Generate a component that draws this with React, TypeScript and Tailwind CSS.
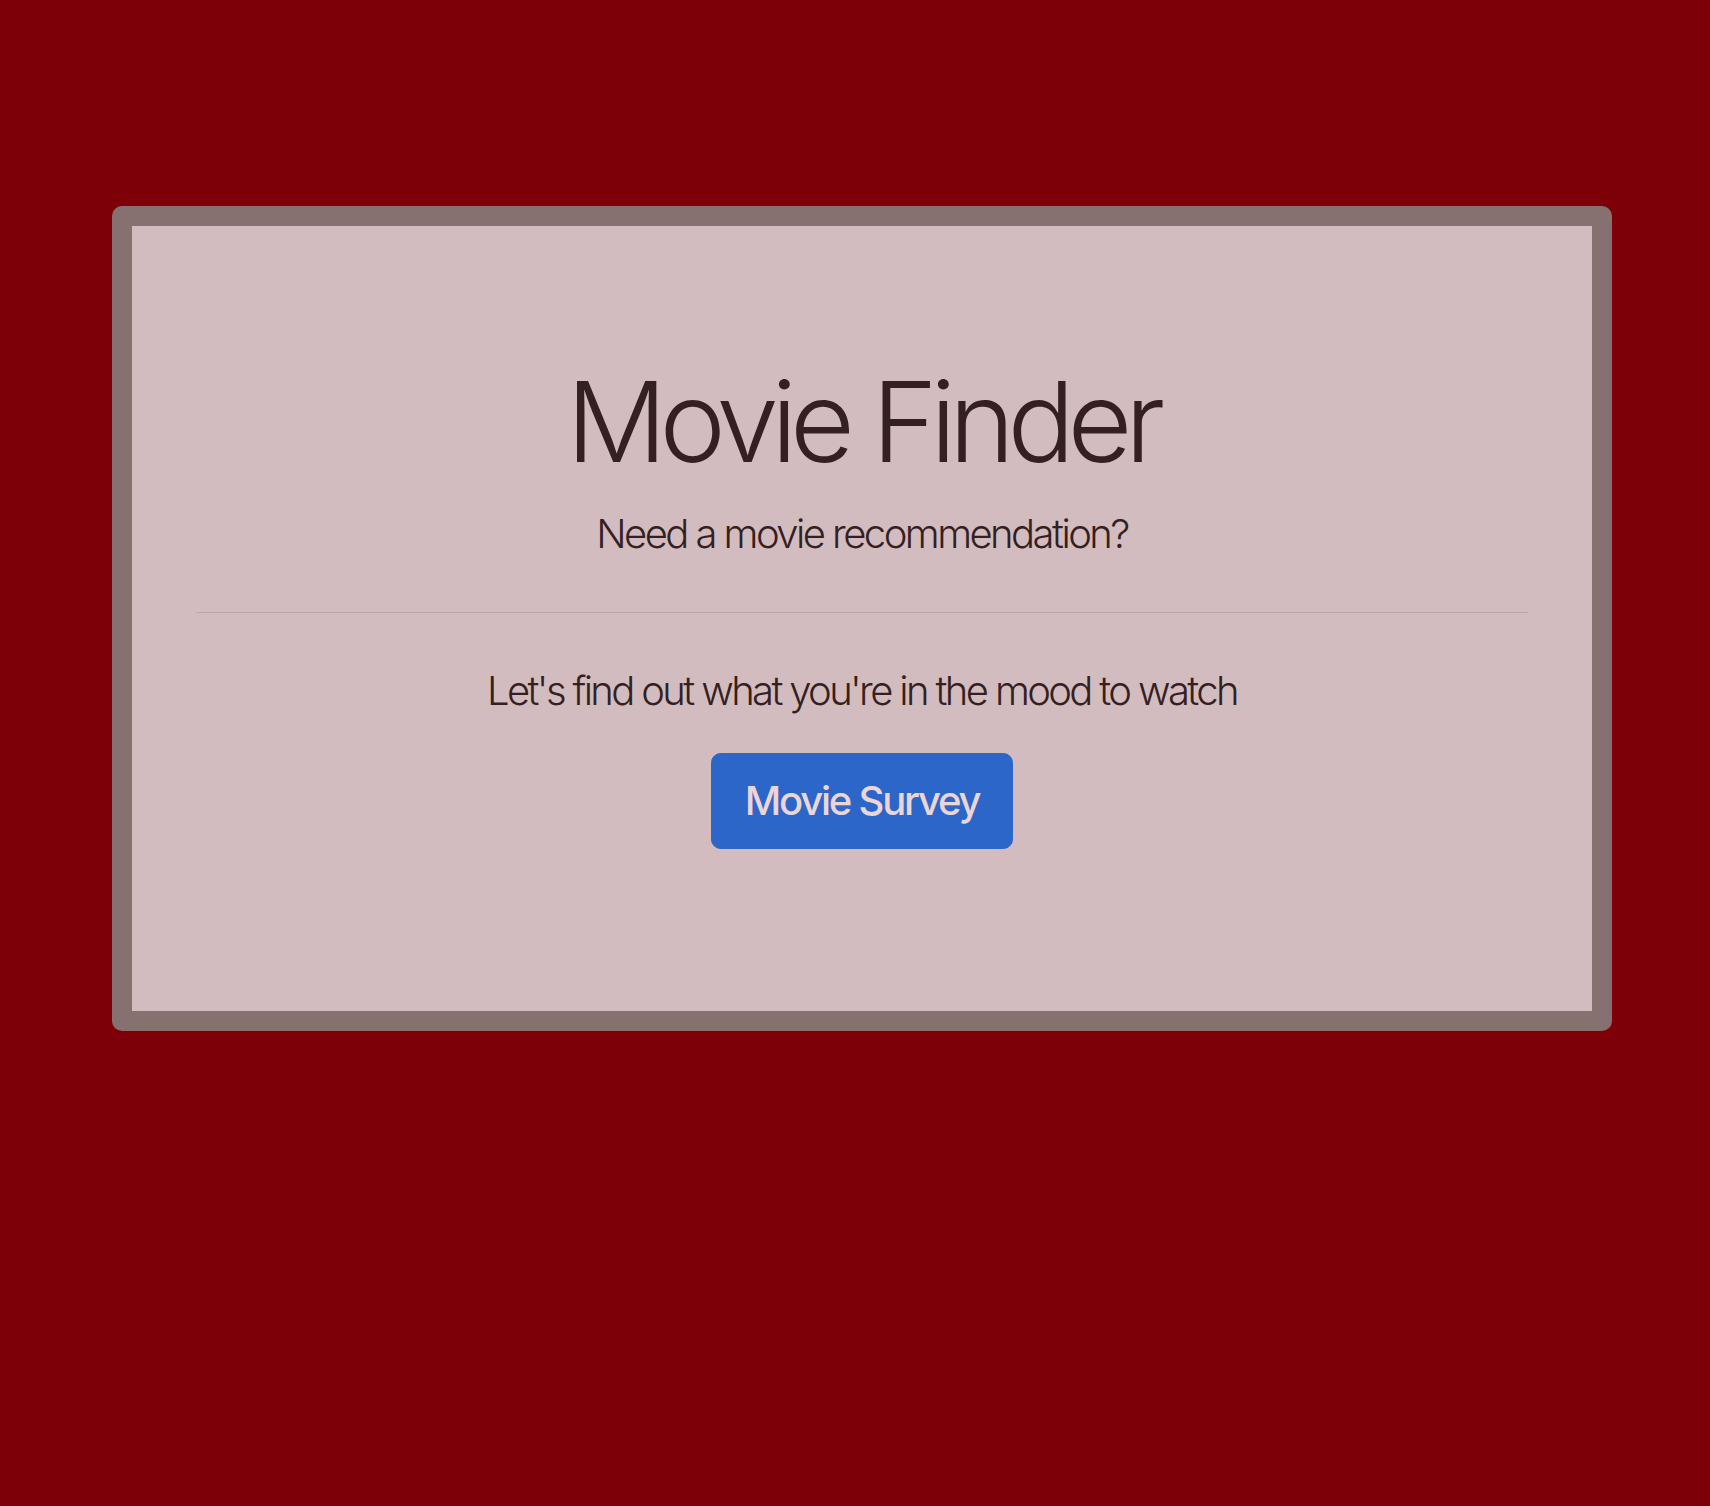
export default function App() {
  return (
    <div
      className="min-h-screen bg-[#7d0008] pl-[112px] pt-[206px]"
      style={{ fontFamily: "Inter, 'Noto Sans', sans-serif" }}
    >
      <div className="w-[1500px] rounded-[10px] border-[20px] border-[#877070] bg-[#d3bcbf] px-16 pb-[130px] pt-32 text-center text-[#341f22]">
        <h1 className="mb-4 text-[112px] font-light leading-[1.2] tracking-[-0.066em]">Movie Finder</h1>
        <p className="mb-8 text-[40px] font-light leading-[1.5] tracking-[-0.064em]">
          Need a movie recommendation?
        </p>
        <hr className="my-12 border-0 border-t border-[#bba4a7]" />
        <p className="mb-8 text-[40px] font-light leading-[1.5] tracking-[-0.066em]">
          Let&apos;s find out what you&apos;re in the mood to watch
        </p>
        <p className="mb-8">
          <button className="rounded-[9.6px] border border-[#2c66c9] bg-[#2c66c9] px-[33px] py-[17px] text-[40px] font-medium leading-[1.5] tracking-[-0.055em] text-[#ecd5d7]">
            Movie Survey
          </button>
        </p>
      </div>
    </div>
  );
}
